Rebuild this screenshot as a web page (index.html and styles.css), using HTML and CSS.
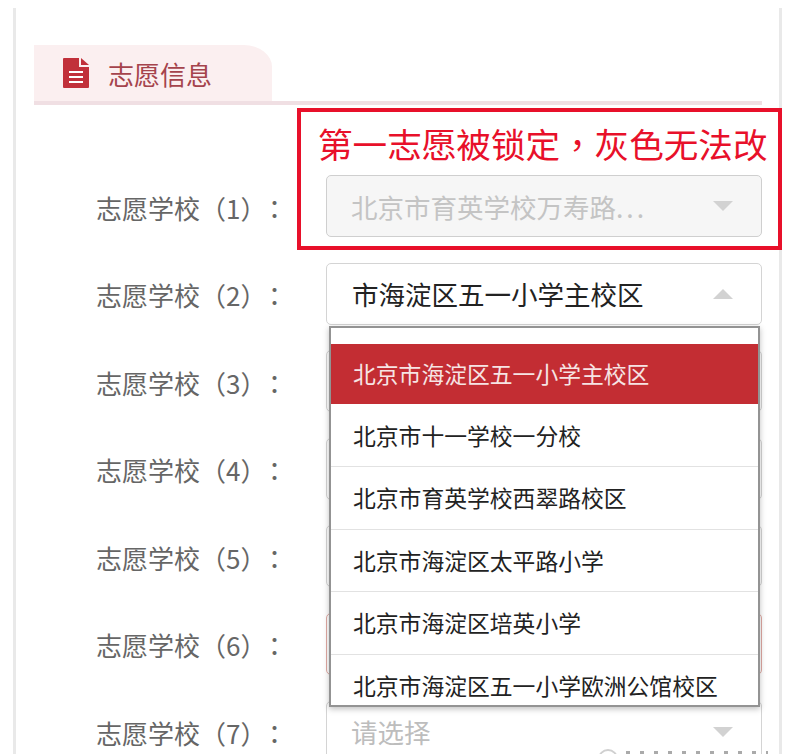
FILE: index.html
```html
<!DOCTYPE html>
<html lang="zh-CN">
<head>
<meta charset="UTF-8">
<title>志愿信息</title>
<link rel="stylesheet" href="styles.css">
</head>
<body>
<div class="card">
  <div class="tab-bar">
    <div class="tab">
      <svg class="tab-icon" viewBox="0 0 26 30" width="26" height="30">
        <path fill="#c1303a" d="M1 0h15v9h10v20a1 1 0 0 1-1 1H1a1 1 0 0 1-1-1V1a1 1 0 0 1 1-1z"/>
        <path fill="#c1303a" d="M18 0l8 7h-8z"/>
        <path fill="#fff" d="M6 13h14v2H6zM6 18h14v2H6zM6 23h14v2H6z"/>
      </svg>
      <span>志愿信息</span>
    </div>
  </div>

  <div class="form">
    <div class="row">
      <div class="label">志愿学校（1）<span class="colon" lang="zh-Hant">：</span></div>
      <div class="select disabled"><span>北京市育英学校万寿路<span class="dots">...</span></span><i class="arrow"></i></div>
    </div>
    <div class="row">
      <div class="label">志愿学校（2）<span class="colon" lang="zh-Hant">：</span></div>
      <div class="select active">
        <span>市海淀区五一小学主校区</span><i class="arrow up"></i>
        <ul class="menu">
          <li class="on">北京市海淀区五一小学主校区</li>
          <li>北京市十一学校一分校</li>
          <li>北京市育英学校西翠路校区</li>
          <li>北京市海淀区太平路小学</li>
          <li>北京市海淀区培英小学</li>
          <li>北京市海淀区五一小学欧洲公馆校区</li>
        </ul>
      </div>
    </div>
    <div class="row">
      <div class="label">志愿学校（3）<span class="colon" lang="zh-Hant">：</span></div>
      <div class="select"></div>
    </div>
    <div class="row">
      <div class="label">志愿学校（4）<span class="colon" lang="zh-Hant">：</span></div>
      <div class="select"></div>
    </div>
    <div class="row">
      <div class="label">志愿学校（5）<span class="colon" lang="zh-Hant">：</span></div>
      <div class="select"></div>
    </div>
    <div class="row">
      <div class="label">志愿学校（6）<span class="colon" lang="zh-Hant">：</span></div>
      <div class="select error"></div>
    </div>
    <div class="row">
      <div class="label">志愿学校（7）<span class="colon" lang="zh-Hant">：</span></div>
      <div class="select placeholder"><span>请选择</span><i class="arrow"></i></div>
    </div>
  </div>

  <div class="note" lang="zh-Hant">第一志愿被锁定，灰色无法改</div>
  <div class="stamp"><i class="stamp-ring"></i><i class="stamp-ticks"></i></div>
</div>
</body>
</html>
```

FILE: styles.css
```css
body {
  margin: 0;
  height: 754px;
  overflow: hidden;
  background-color: #fff;
  font-family: "Noto Sans CJK SC", "Roboto", sans-serif;
}

.card {
  position: relative;
  box-sizing: border-box;
  width: 769px;
  height: 746px;
  margin: 8px 0 0 13px;
  padding: 37px 17px 0 18px;
  border-left: 3px solid #e9e9e9;
  border-right: 3px solid #e9e9e9;
}

.tab-bar {
  height: 56px;
  border-bottom: 4px solid #f0dfe3;
}

.tab {
  display: flex;
  align-items: center;
  width: 238px;
  height: 56px;
  padding-left: 29px;
  box-sizing: border-box;
  background-color: #fbeff0;
  border-top-right-radius: 28px 22px;
  color: #a5434c;
  font-size: 26px;
}

.tab-icon {
  margin-right: 19px;
}

.form {
  padding-top: 70px;
}

.row {
  display: flex;
  align-items: center;
  height: 62px;
  margin-bottom: 25.6px;
}

.label {
  flex: none;
  width: 230px;
  margin-left: 62px;
  padding-top: 2px;
  color: #666;
  font-size: 26px;
  white-space: nowrap;
  box-sizing: border-box;
}

.colon {
  margin-left: 8px;
  font-family: "Noto Sans CJK TC", sans-serif;
}

.select {
  position: relative;
  display: flex;
  align-items: center;
  justify-content: space-between;
  box-sizing: border-box;
  width: 436px;
  height: 62px;
  padding: 0 28px 0 24px;
  background-color: #fff;
  border: 1px solid #d4d4d4;
  border-radius: 5px;
  color: #222;
  font-size: 26.5px;
}

.select.disabled {
  background-color: #f6f6f6;
  border-color: #cfcfcf;
  color: #c4c4c4;
}

.dots {
  letter-spacing: 3px;
}

.select.placeholder {
  color: #bdbdbd;
}

.select.error {
  border-color: #e0a9a3;
}

.select.active {
  padding-left: 25px;
}

.arrow {
  width: 0;
  height: 0;
  border-left: 10px solid transparent;
  border-right: 10px solid transparent;
  border-top: 10px solid #d2d2d2;
}

.arrow.up {
  border-top: 0;
  border-bottom: 10px solid #d2d2d2;
}

.menu {
  position: absolute;
  z-index: 2;
  top: 62px;
  left: 2px;
  width: 431px;
  height: 381px;
  box-sizing: border-box;
  margin: 0;
  padding: 16px 0 0;
  list-style: none;
  overflow: hidden;
  background-color: #fff;
  border: 2px solid #939393;
  box-shadow: 0 2px 6px rgba(0, 0, 0, 0.25);
  color: #222;
  font-size: 22.8px;
}

.menu li {
  box-sizing: border-box;
  height: 62.6px;
  line-height: 62px;
  padding-left: 22px;
  border-bottom: 1px solid #e2e2e2;
  white-space: nowrap;
}

.menu li.on {
  height: 60px;
  margin-bottom: 1px;
  background-color: #c32d33;
  border-bottom: 0;
  color: #f6e4e4;
  line-height: 60px;
}

.note {
  position: absolute;
  z-index: 3;
  top: 100px;
  left: 281px;
  box-sizing: border-box;
  width: 485px;
  height: 142px;
  padding: 7px 0 0 17px;
  border: 4px solid #e8102a;
  color: #e8102a;
  font-family: "Noto Sans CJK TC", sans-serif;
  font-size: 34.6px;
  line-height: 48px;
  white-space: nowrap;
}

.stamp {
  position: absolute;
  z-index: 3;
  left: 582px;
  top: 741px;
  display: flex;
  align-items: flex-start;
  gap: 8px;
}

.stamp-ring {
  width: 20px;
  height: 20px;
  box-sizing: border-box;
  border: 2px solid #d0d0d0;
  border-radius: 50%;
}

.stamp-ticks {
  width: 142px;
  height: 4px;
  margin-top: 2px;
  background: repeating-linear-gradient(90deg, #555 0 4px, transparent 4px 14px);
  opacity: 0.5;
}
```
